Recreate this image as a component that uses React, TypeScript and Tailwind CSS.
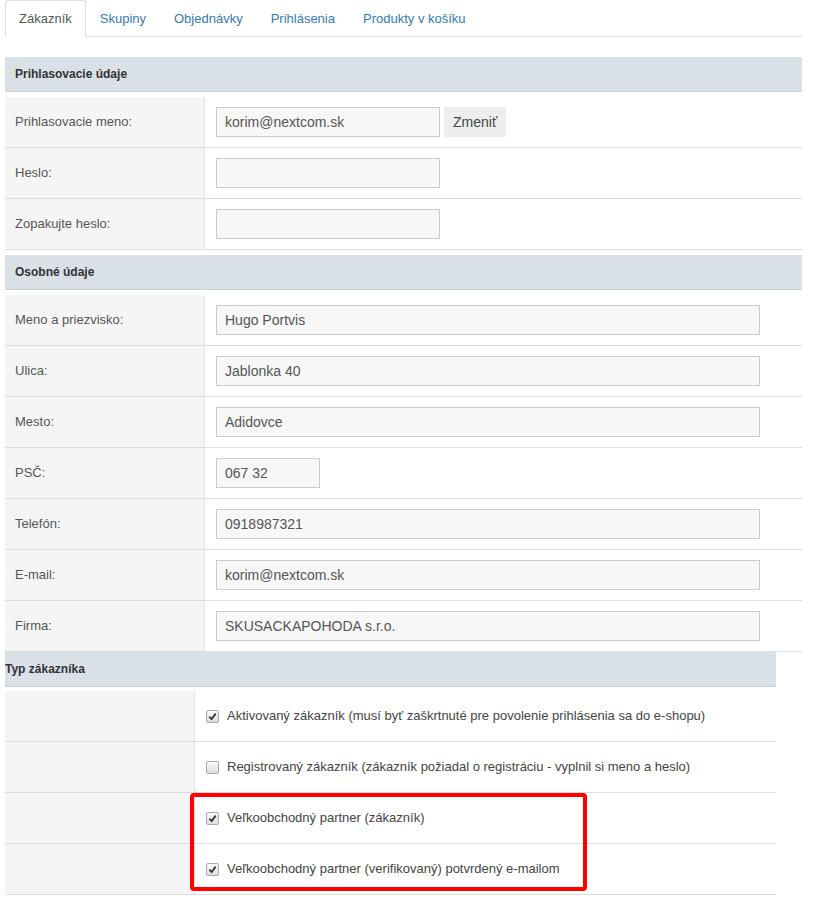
import React from 'react'

const TABS = ['Zákazník', 'Skupiny', 'Objednávky', 'Prihlásenia', 'Produkty v košíku']

function SectionHeader({ title, className = '' }: { title: string; className?: string }) {
    return (
        <div className={`h-[35px] flex items-center bg-[#d9e0e6] border-b border-[#c9d1d8] text-[12px] font-bold text-[#333] ${className}`}>
            {title}
        </div>
    )
}

function Row({ label, children, labelW = 'w-[200px]' }: { label: string; children?: React.ReactNode; labelW?: string }) {
    return (
        <div className="flex h-[51px] border-b border-[#dddddd]">
            <div className={`${labelW} shrink-0 bg-[#f5f5f5] border-r border-[#e3e3e3] flex items-center pl-[10px] text-[13px] text-[#555]`}>
                {label}
            </div>
            <div className="flex-1 flex items-center pl-[11px]">{children}</div>
        </div>
    )
}

function Field({ value = '', w }: { value?: string; w: string }) {
    return (
        <div className={`${w} h-[30px] bg-[#f7f7f7] border border-[#cccccc] flex items-center px-[8px] text-[14px] text-[#555]`}>
            {value}
        </div>
    )
}

function Check({ checked, label }: { checked: boolean; label: string }) {
    return (
        <div className="flex items-center text-[13px] text-[#444]">
            <span className="w-[13px] h-[13px] rounded-[2px] border border-[#a9a9a9] bg-gradient-to-b from-[#fbfbfb] to-[#dedede] flex items-center justify-center mr-[8px]">
                {checked && (
                    <svg width="9" height="9" viewBox="0 0 10 10">
                        <path d="M1.5 5.2 L4 7.8 L8.6 1.8" fill="none" stroke="#333" strokeWidth="2" />
                    </svg>
                )}
            </span>
            {label}
        </div>
    )
}

export default function App() {
    return (
        <div className="w-[813px] h-[900px] bg-white" style={{ fontFamily: '"Liberation Sans", Arial, sans-serif' }}>
            {/* tabs */}
            <div className="ml-[5px] w-[797px] h-[37px] flex border-b border-[#dddddd]">
                {TABS.map((t, i) => (
                    <div
                        key={t}
                        className={`h-[37px] px-[13px] flex items-center text-[13px] ${i === 0 ? 'bg-white border border-[#dddddd] border-b-white rounded-t-[3px] text-[#555]' : 'text-[#337ab7] mx-[1px]'}`}
                    >
                        {t}
                    </div>
                ))}
            </div>

            {/* Prihlasovacie údaje */}
            <div className="ml-[5px] w-[797px] mt-[20px]">
                <SectionHeader title="Prihlasovacie údaje" className="pl-[10px]" />
                <div className="mt-[5px]">
                    <Row label="Prihlasovacie meno:">
                        <Field value="korim@nextcom.sk" w="w-[224px]" />
                        <div className="ml-[4px] h-[30px] px-[9px] bg-[#eeeeee] flex items-center text-[14px] text-[#444]">Zmeniť</div>
                    </Row>
                    <Row label="Heslo:">
                        <Field w="w-[224px]" />
                    </Row>
                    <Row label="Zopakujte heslo:">
                        <Field w="w-[224px]" />
                    </Row>
                </div>
            </div>

            {/* Osobné údaje */}
            <div className="ml-[5px] w-[797px] mt-[5px]">
                <SectionHeader title="Osobné údaje" className="pl-[10px]" />
                <div className="mt-[5px]">
                    <Row label="Meno a priezvisko:">
                        <Field value="Hugo Portvis" w="w-[544px]" />
                    </Row>
                    <Row label="Ulica:">
                        <Field value="Jablonka 40" w="w-[544px]" />
                    </Row>
                    <Row label="Mesto:">
                        <Field value="Adidovce" w="w-[544px]" />
                    </Row>
                    <Row label="PSČ:">
                        <Field value="067 32" w="w-[104px]" />
                    </Row>
                    <Row label="Telefón:">
                        <Field value="0918987321" w="w-[544px]" />
                    </Row>
                    <Row label="E-mail:">
                        <Field value="korim@nextcom.sk" w="w-[544px]" />
                    </Row>
                    <Row label="Firma:">
                        <Field value="SKUSACKAPOHODA s.r.o." w="w-[544px]" />
                    </Row>
                </div>
            </div>

            {/* Typ zákazníka */}
            <div className="ml-[5px] w-[771px]">
                <SectionHeader title="Typ zákazníka" />
                <div className="mt-[4px]">
                    <Row label="" labelW="w-[190px]">
                        <Check checked label="Aktivovaný zákazník (musí byť zaškrtnuté pre povolenie prihlásenia sa do e-shopu)" />
                    </Row>
                    <Row label="" labelW="w-[190px]">
                        <Check checked={false} label="Registrovaný zákazník (zákazník požiadal o registráciu - vyplnil si meno a heslo)" />
                    </Row>
                    <div className="relative">
                        <Row label="" labelW="w-[190px]">
                            <Check checked label="Veľkoobchodný partner (zákazník)" />
                        </Row>
                        <Row label="" labelW="w-[190px]">
                            <Check checked label="Veľkoobchodný partner (verifikovaný) potvrdený e-mailom" />
                        </Row>
                        <div className="absolute left-[185px] top-0 w-[397px] h-[98px] border-[4px] border-[#ff0000] rounded-[4px]" />
                    </div>
                </div>
            </div>
        </div>
    )
}
